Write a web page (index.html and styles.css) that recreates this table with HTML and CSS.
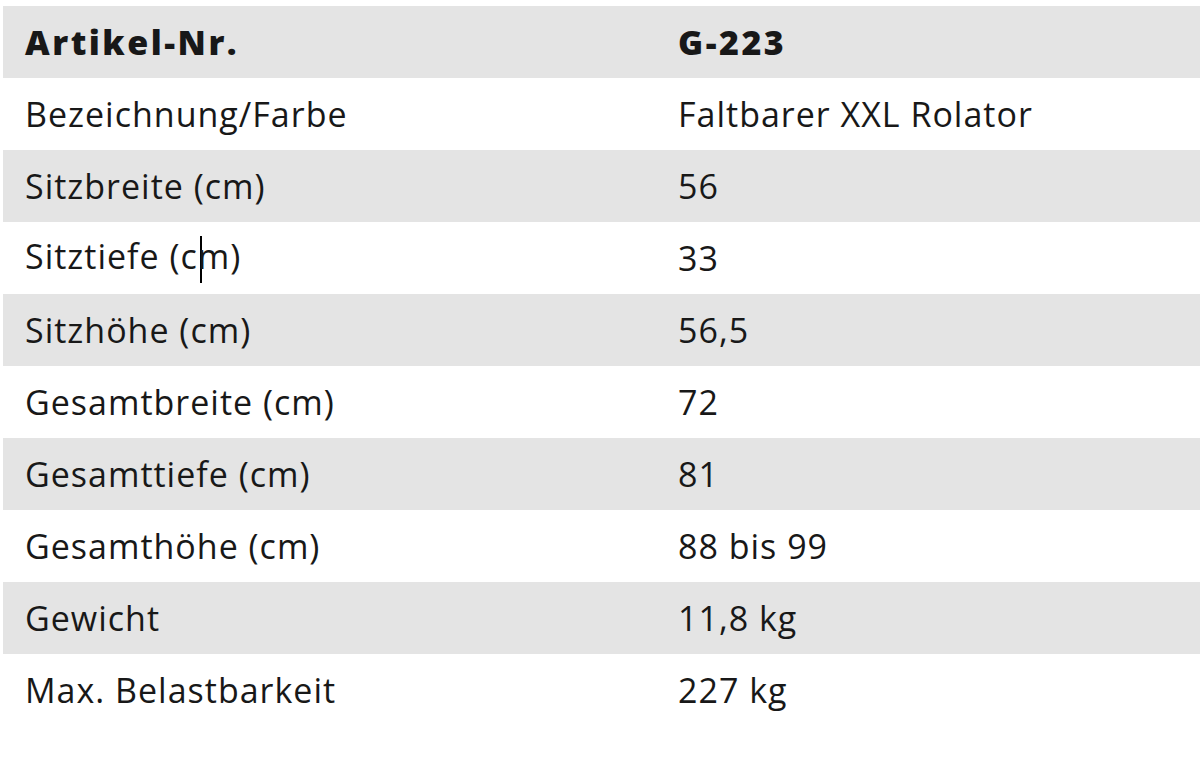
FILE: index.html
```html
<!DOCTYPE html>
<html lang="de">
<head>
<meta charset="utf-8">
<link rel="stylesheet" href="styles.css">
</head>
<body>
<div class="page">
  <table class="spec">
    <tbody>
      <tr class="head"><td class="k">Artikel-Nr.</td><td class="v">G-223</td></tr>
      <tr><td class="k">Bezeichnung/Farbe</td><td class="v">Faltbarer XXL Rolator</td></tr>
      <tr><td class="k">Sitzbreite (cm)</td><td class="v">56</td></tr>
      <tr><td class="k">Sitztiefe (c<span class="caret"></span>m)</td><td class="v">33</td></tr>
      <tr><td class="k">Sitzhöhe (cm)</td><td class="v">56,5</td></tr>
      <tr><td class="k">Gesamtbreite (cm)</td><td class="v">72</td></tr>
      <tr><td class="k">Gesamttiefe (cm)</td><td class="v">81</td></tr>
      <tr><td class="k">Gesamthöhe (cm)</td><td class="v">88 bis 99</td></tr>
      <tr><td class="k">Gewicht</td><td class="v">11,8 kg</td></tr>
      <tr><td class="k">Max. Belastbarkeit</td><td class="v">227 kg</td></tr>
    </tbody>
  </table>
</div>
</body>
</html>
```
FILE: styles.css
```css
html, body {
  margin: 0;
  padding: 0;
  background: #ffffff;
}
.page {
  padding: 6px 0 0 3px;
}
.spec {
  width: 1197px;
  border-collapse: collapse;
  font-family: "Open Sans", "DejaVu Sans", sans-serif;
  font-size: 34px;
  letter-spacing: 1px;
  color: #181818;
}
.spec td {
  height: 72px;
  padding: 0;
  vertical-align: middle;
  box-sizing: border-box;
}
.spec tr:nth-child(odd) {
  background: #e4e4e4;
}
.spec .k {
  width: 675px;
  padding-left: 22px;
}
.spec .head td {
  font-weight: 800;
  letter-spacing: 2.5px;
}
.caret {
  display: inline-block;
  width: 2px;
  height: 47px;
  margin: 0 -4px 0 2px;
  background: #000;
  vertical-align: middle;
}
```
